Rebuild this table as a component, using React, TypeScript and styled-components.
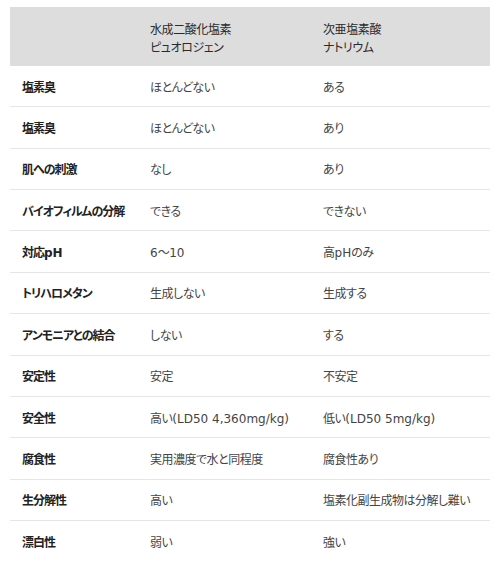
import React from "react";
import styled, { createGlobalStyle } from "styled-components";

const GlobalStyle = createGlobalStyle`
  body {
    margin: 0;
    background: #fff;
    font-family: "DejaVu Sans", "Noto Sans CJK JP", sans-serif;
  }
`;

const rows: [string, string, string][] = [
  ["塩素臭", "ほとんどない", "ある"],
  ["塩素臭", "ほとんどない", "あり"],
  ["肌への刺激", "なし", "あり"],
  ["バイオフィルムの分解", "できる", "できない"],
  ["対応pH", "6〜10", "高pHのみ"],
  ["トリハロメタン", "生成しない", "生成する"],
  ["アンモニアとの結合", "しない", "する"],
  ["安定性", "安定", "不安定"],
  ["安全性", "高い(LD50 4,360mg/kg)", "低い(LD50 5mg/kg)"],
  ["腐食性", "実用濃度で水と同程度", "腐食性あり"],
  ["生分解性", "高い", "塩素化副生成物は分解し難い"],
  ["漂白性", "弱い", "強い"],
];

const Wrap = styled.div`
  padding: 7px 10px 0 10px;
`;

const Table = styled.table`
  width: 480px;
  border-collapse: collapse;
  table-layout: fixed;
  font-size: 12px;
  color: #333;
  font-feature-settings: "palt";
`;

const HeadCell = styled.th`
  background: #dddddd;
  height: 59px;
  padding: 4px 12px 0 12px;
  box-sizing: border-box;
  text-align: left;
  font-weight: normal;
  line-height: 18px;
  letter-spacing: -0.4px;
  vertical-align: middle;
  color: #2a2a2a;
`;

const Row = styled.tr<{ $last?: boolean }>`
  border-bottom: 1px solid ${(p) => (p.$last ? "transparent" : "#e6e6e6")};
`;

const Cell = styled.td<{ $label?: boolean }>`
  height: 40.36px;
  padding: 0 12px;
  vertical-align: middle;
  font-weight: ${(p) => (p.$label ? "bold" : "normal")};
  letter-spacing: ${(p) => (p.$label ? "-1px" : "-0.5px")};
  color: ${(p) => (p.$label ? "#222" : "#444")};
  white-space: nowrap;
`;

const Latin = styled.span`
  letter-spacing: 0;
`;

// keep ASCII runs at normal tracking, tighten only the Japanese text
const Text = ({ value }: { value: string }) => (
  <>
    {value.split(/([\x20-\x7e]+)/).map((part, i) =>
      /^[\x20-\x7e]+$/.test(part) ? <Latin key={i}>{part}</Latin> : part
    )}
  </>
);

export default function App() {
  return (
    <>
      <GlobalStyle />
      <Wrap>
        <Table>
          <colgroup>
            <col style={{ width: 128 }} />
            <col style={{ width: 173 }} />
            <col />
          </colgroup>
          <thead>
            <tr>
              <HeadCell />
              <HeadCell>
                水成二酸化塩素
                <br />
                ピュオロジェン
              </HeadCell>
              <HeadCell>
                次亜塩素酸
                <br />
                ナトリウム
              </HeadCell>
            </tr>
          </thead>
          <tbody>
            {rows.map((r, i) => (
              <Row key={i} $last={i === rows.length - 1}>
                <Cell $label>
                  <Text value={r[0]} />
                </Cell>
                <Cell>
                  <Text value={r[1]} />
                </Cell>
                <Cell>
                  <Text value={r[2]} />
                </Cell>
              </Row>
            ))}
          </tbody>
        </Table>
      </Wrap>
    </>
  );
}
